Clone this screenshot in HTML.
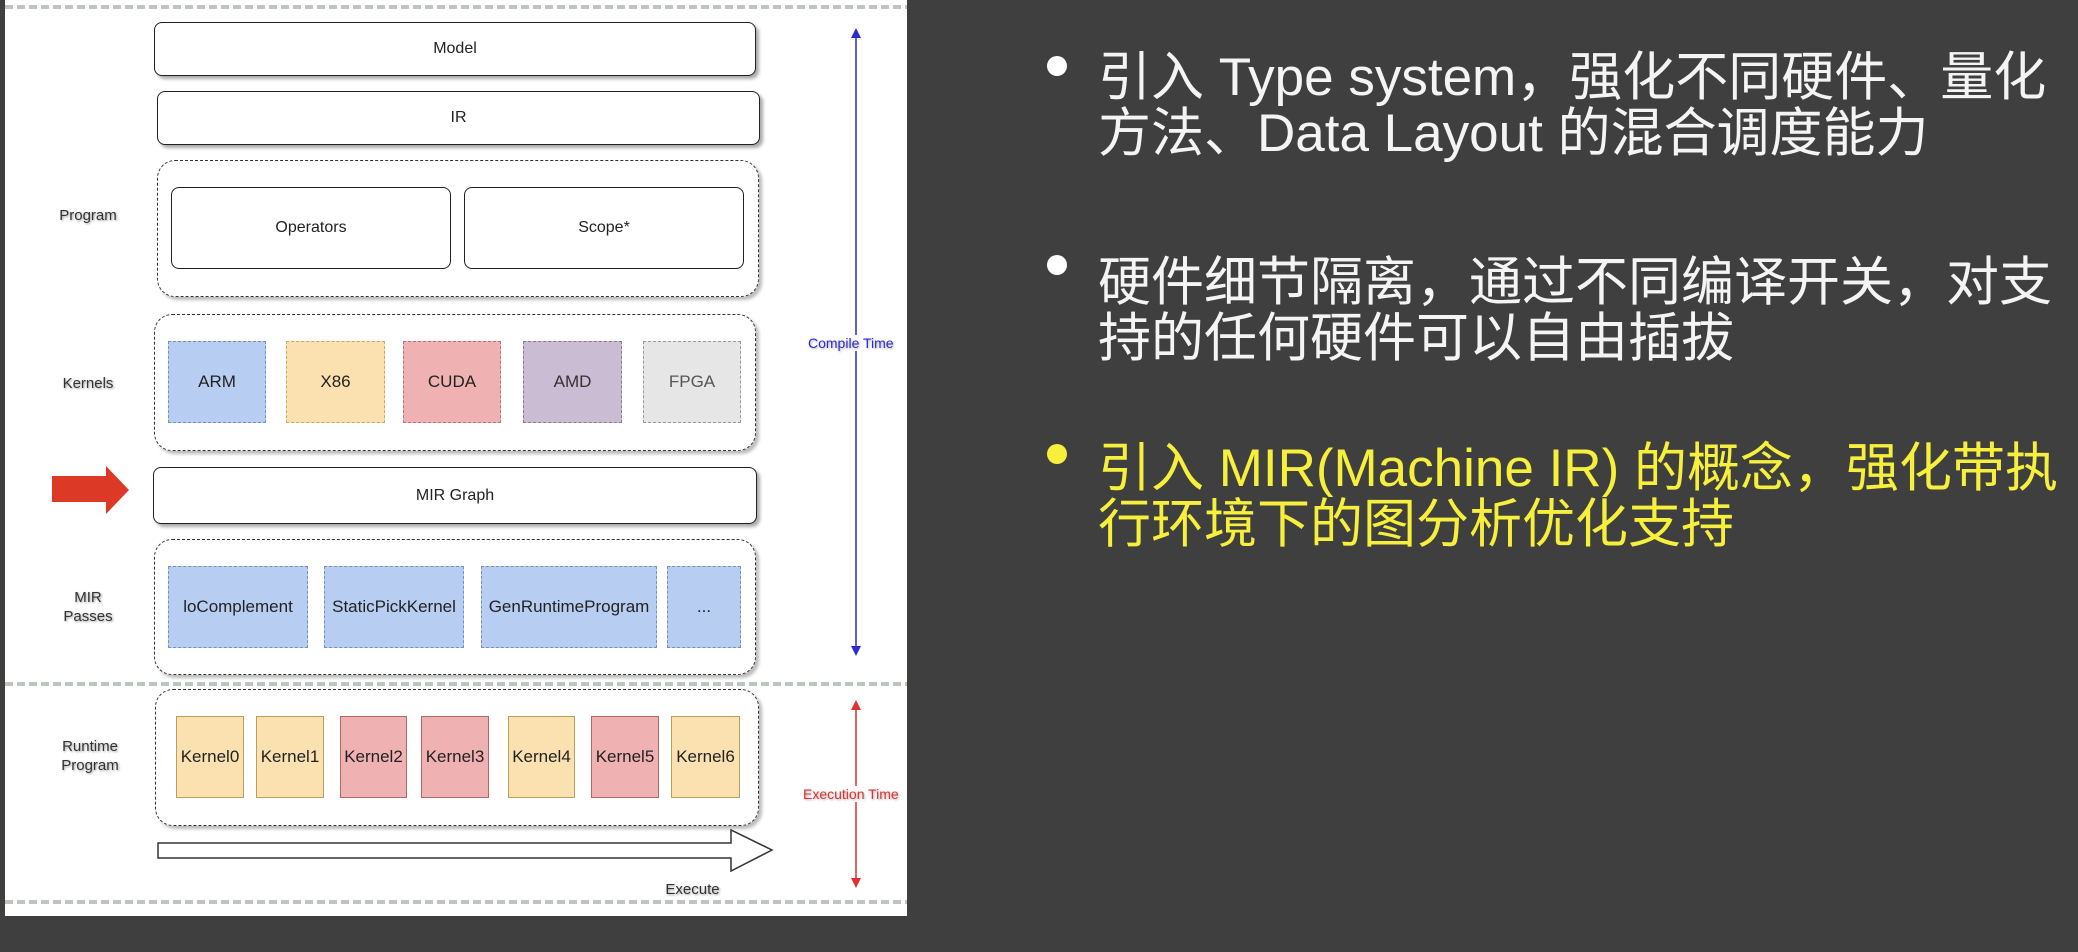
<!DOCTYPE html>
<html><head><meta charset="utf-8"><style>
*{margin:0;padding:0;box-sizing:border-box}
body{width:2078px;height:952px;background:#3f3f3f;position:relative;overflow:hidden;font-family:"Liberation Sans","Noto Sans CJK SC",sans-serif}
#panel{position:absolute;left:5px;top:0;width:902px;height:916px;background:#fff}
.a{position:absolute}
.box{position:absolute;border:1.5px solid #222;border-radius:8px;background:#fff;box-shadow:3px 3px 3px #aaa;display:flex;align-items:center;justify-content:center;font-size:16px;color:#222}
.dash{position:absolute;border:1.5px dashed #333;border-radius:18px;box-shadow:3px 3px 3px #bbb}
.k{position:absolute;border:1.3px dashed #7890b8;display:flex;align-items:center;justify-content:center;font-size:17px;color:#222}
.r{position:absolute;border:1.3px solid #b8a060;display:flex;align-items:center;justify-content:center;font-size:17px;color:#222}
.lbl{position:absolute;font-size:15px;color:#333;text-align:center;line-height:19px;text-shadow:1px 1px 2px #999}
.sep{position:absolute;left:0;width:902px;height:4px;background:repeating-linear-gradient(90deg,#bcc6be 0 8px,transparent 8px 12px)}
.t{position:absolute;left:1098px;font-size:53px;line-height:56px;color:#f4f4f4;white-space:nowrap}
.dot{position:absolute;left:1047px;width:20px;height:20px;border-radius:50%;background:#fff}
</style></head><body>
<div id="panel">
<div class="sep" style="top:5px"></div>
<div class="sep" style="top:682px"></div>
<div class="sep" style="top:900px"></div>
</div>
<div class="box" style="left:154px;top:22px;width:602px;height:54px">Model</div>
<div class="box" style="left:157px;top:91px;width:603px;height:54px">IR</div>
<div class="dash" style="left:157px;top:160px;width:602px;height:137px"></div>
<div class="box" style="left:171px;top:187px;width:280px;height:82px;box-shadow:none">Operators</div>
<div class="box" style="left:464px;top:187px;width:280px;height:82px;box-shadow:none">Scope*</div>
<div class="lbl" style="left:50px;top:206px;width:76px">Program</div>

<div class="dash" style="left:154px;top:314px;width:602px;height:137px"></div>
<div class="k" style="left:168px;top:341px;width:98px;height:82px;background:#b8cdf2">ARM</div>
<div class="k" style="left:286px;top:341px;width:99px;height:82px;background:#fbe0b0;border-color:#c8a868">X86</div>
<div class="k" style="left:403px;top:341px;width:98px;height:82px;background:#efb1b1;border-color:#c07070">CUDA</div>
<div class="k" style="left:523px;top:341px;width:99px;height:82px;background:#cabcd2;border-color:#907890;color:#333">AMD</div>
<div class="k" style="left:643px;top:341px;width:98px;height:82px;background:#e6e6e6;border-color:#999;color:#555">FPGA</div>
<div class="lbl" style="left:50px;top:374px;width:76px">Kernels</div>

<svg class="a" style="left:50px;top:464px" width="82" height="52"><polygon points="2,12 56,12 56,2 79,26 56,50 56,38 2,38" fill="#dc3a26"/></svg>
<div class="box" style="left:153px;top:467px;width:604px;height:57px">MIR Graph</div>

<div class="dash" style="left:154px;top:539px;width:602px;height:136px"></div>
<div class="k" style="left:168px;top:566px;width:140px;height:82px;background:#b8cdf2">loComplement</div>
<div class="k" style="left:324px;top:566px;width:140px;height:82px;background:#b8cdf2">StaticPickKernel</div>
<div class="k" style="left:481px;top:566px;width:176px;height:82px;background:#b8cdf2">GenRuntimeProgram</div>
<div class="k" style="left:667px;top:566px;width:74px;height:82px;background:#b8cdf2">...</div>
<div class="lbl" style="left:50px;top:588px;width:76px">MIR<br>Passes</div>

<div class="dash" style="left:155px;top:689px;width:604px;height:137px"></div>
<div class="r" style="left:176px;top:716px;width:68px;height:82px;background:#fbe0b0">Kernel0</div>
<div class="r" style="left:256px;top:716px;width:68px;height:82px;background:#fbe0b0">Kernel1</div>
<div class="r" style="left:340px;top:716px;width:67px;height:82px;background:#efb1b1;border-color:#b06868">Kernel2</div>
<div class="r" style="left:421px;top:716px;width:68px;height:82px;background:#efb1b1;border-color:#b06868">Kernel3</div>
<div class="r" style="left:508px;top:716px;width:67px;height:82px;background:#fbe0b0">Kernel4</div>
<div class="r" style="left:591px;top:716px;width:68px;height:82px;background:#efb1b1;border-color:#b06868">Kernel5</div>
<div class="r" style="left:671px;top:716px;width:69px;height:82px;background:#fbe0b0">Kernel6</div>
<div class="lbl" style="left:50px;top:737px;width:80px">Runtime<br>Program</div>

<svg class="a" style="left:155px;top:826px" width="622" height="50"><polygon points="3,17 576,17 576,4 617,24 576,45 576,32 3,32" fill="#fff" stroke="#333" stroke-width="1.5"/></svg>
<div class="lbl" style="left:660px;top:880px;width:65px">Execute</div>

<svg class="a" style="left:846px;top:26px" width="20" height="870">
<line x1="10" y1="6" x2="10" y2="626" stroke="#2a2ad0" stroke-width="1.5"/>
<polygon points="10,2 5,12 15,12" fill="#2a2ad0"/><polygon points="10,630 5,620 15,620" fill="#2a2ad0"/>
<line x1="10" y1="678" x2="10" y2="858" stroke="#e03030" stroke-width="1.5"/>
<polygon points="10,674 5,684 15,684" fill="#e03030"/><polygon points="10,862 5,852 15,852" fill="#e03030"/>
</svg>
<div class="a" style="left:808px;top:335px;font-size:14px;color:#2a2ad0;background:#fff;text-shadow:1px 1px 2px #aaa">Compile Time</div>
<div class="a" style="left:803px;top:786px;font-size:14px;color:#e03030;background:#fff;text-shadow:1px 1px 2px #aaa">Execution Time</div>

<div class="dot" style="top:56px"></div>
<div class="t" style="top:50px">引入 Type system，强化不同硬件、量化<br>方法、Data Layout 的混合调度能力</div>
<div class="dot" style="top:255px"></div>
<div class="t" style="top:255px">硬件细节隔离，通过不同编译开关，对支<br>持的任何硬件可以自由插拔</div>
<div class="dot" style="top:444px;background:#f6ef3c"></div>
<div class="t" style="top:441px;color:#f6ef3c">引入 MIR(Machine IR) 的概念，强化带执<br>行环境下的图分析优化支持</div>
</body></html>
